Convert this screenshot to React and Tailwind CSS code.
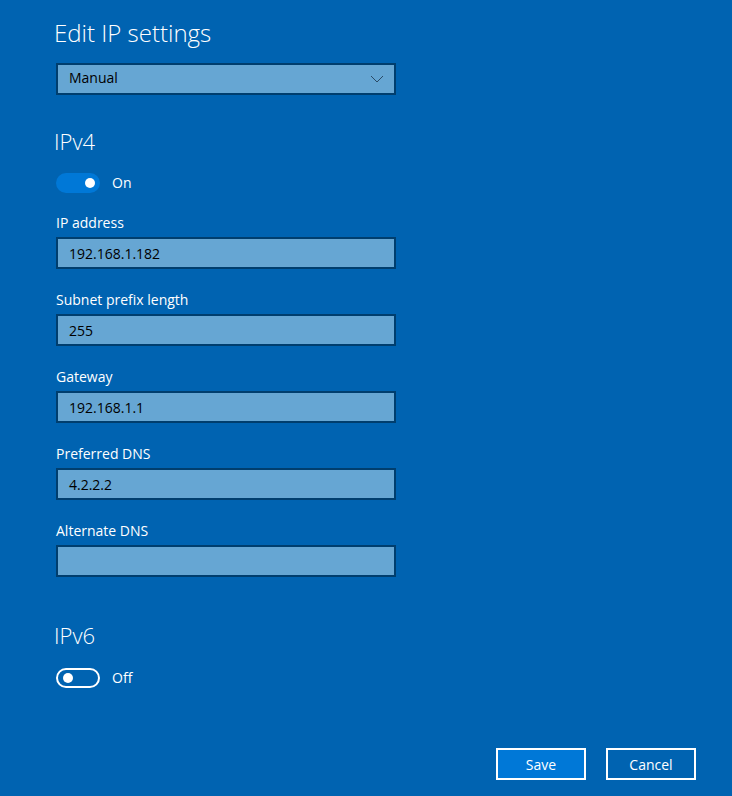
import React, { useState } from 'react';

const fields = [
    { label: 'IP address', value: '192.168.1.182' },
    { label: 'Subnet prefix length', value: '255' },
    { label: 'Gateway', value: '192.168.1.1' },
    { label: 'Preferred DNS', value: '4.2.2.2' },
    { label: 'Alternate DNS', value: '' },
];

const Toggle = ({ on, onClick }) => (
    <button onClick={onClick} className="flex items-center gap-3">
        <span
            className={`w-11 h-5 rounded-full flex items-center px-[5px] ${on ? 'bg-[#0078d7] justify-end' : 'border-2 border-white justify-start'}`}
        >
            <span className="w-2.5 h-2.5 rounded-full bg-white" />
        </span>
        <span className="text-[14px] text-white">{on ? 'On' : 'Off'}</span>
    </button>
);

const App = () => {
    const [ipv4, setIpv4] = useState(true);
    const [ipv6, setIpv6] = useState(false);

    return (
        <div className="w-[732px] h-[796px] bg-[#0063b1] text-white font-['Open_Sans','Noto_Sans',sans-serif] flex flex-col">
            <div className="pl-14 pt-[17px] flex-1">
                <h1 className="text-[24px] leading-8 font-light -ml-0.5">Edit IP settings</h1>

                <div className="mt-3.5 w-[340px] h-8 bg-[#66a6d3] border-2 border-[#003e6e] flex items-center justify-between pl-[11px] pr-[10px] text-[14px] leading-5 text-black">
                    <span className="-mt-0.5">Manual</span>
                    <svg width="14" height="8" viewBox="0 0 14 8" fill="none" stroke="#2a4a66" strokeWidth="1">
                        <path d="M1 1l6 6 6-6" />
                    </svg>
                </div>

                <h2 className="mt-8 text-[22px] leading-7 font-light -ml-0.5">IPv4</h2>
                <div className="mt-[17px]">
                    <Toggle on={ipv4} onClick={() => setIpv4(!ipv4)} />
                </div>

                <div className="mt-5 flex flex-col gap-[21px]">
                    {fields.map((f) => (
                        <div key={f.label} className="flex flex-col">
                            <label className="text-[14px] leading-5 text-white">{f.label}</label>
                            <div className="mt-[4px] w-[340px] h-8 bg-[#66a6d3] border-2 border-[#003e6e] flex items-center pl-[11px] text-[14px] text-black">
                                {f.value}
                            </div>
                        </div>
                    ))}
                </div>

                <h2 className="mt-[44px] text-[22px] leading-7 font-light -ml-0.5">IPv6</h2>
                <div className="mt-[18px]">
                    <Toggle on={ipv6} onClick={() => setIpv6(!ipv6)} />
                </div>
            </div>

            <div className="flex justify-end gap-5 pr-9 pb-4">
                <button className="w-[90px] h-8 bg-[#0078d7] border-2 border-white text-[14px] text-white">Save</button>
                <button className="w-[90px] h-8 border-2 border-white text-[14px] text-white">Cancel</button>
            </div>
        </div>
    );
};

export default App;
